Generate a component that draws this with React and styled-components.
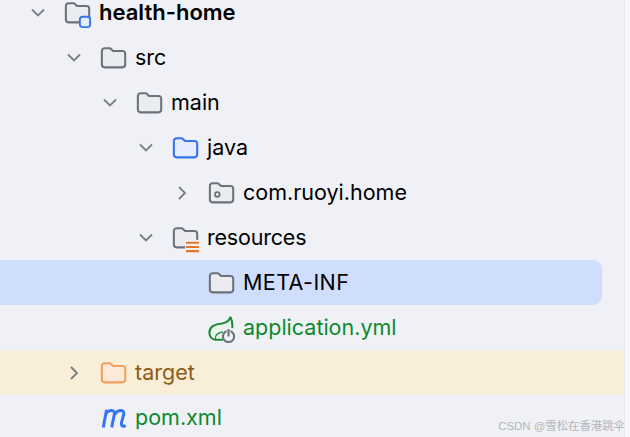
import React from "react";
import styled, { createGlobalStyle } from "styled-components";

const GlobalStyle = createGlobalStyle`
  html, body {
    margin: 0;
    padding: 0;
    height: 437px;
    overflow: hidden;
    background: #f8f9fb;
  }
`;

const Panel = styled.div`
  position: relative;
  box-sizing: border-box;
  width: 625px;
  height: 437px;
  overflow: hidden;
  background: #f0f1f6;
  border-right: 1px solid #e6e7eb;
  font-family: Inter, "Liberation Sans", sans-serif;
`;

const List = styled.ul`
  list-style: none;
  margin: -10px 0 0;
  padding: 0;
`;

const rowBackgrounds = {
  selected: "#cfdefc",
  excluded: "#f9eed8",
};

const Row = styled.li`
  display: flex;
  align-items: center;
  height: 45px;
  padding-left: ${(props) => 26 + props.$level * 36}px;
  width: ${(props) => (props.$state === "selected" ? "602px" : "auto")};
  box-sizing: border-box;
  background: ${(props) => rowBackgrounds[props.$state] || "transparent"};
  border-radius: ${(props) => (props.$state === "selected" ? "0 9px 9px 0" : "0")};
`;

const Arrow = styled.span`
  display: flex;
  justify-content: center;
  width: 24px;
  margin-right: 14px;
`;

const IconBox = styled.span`
  display: flex;
  width: 28px;
  height: 28px;
  margin-right: 7px;
`;

const Name = styled.span`
  padding-bottom: 2px;
  font-size: ${(props) => (props.$bold ? "22px" : "21.5px")};
  line-height: 28px;
  letter-spacing: ${(props) => props.$tracking || 0}px;
  white-space: nowrap;
  color: ${(props) => props.$color || "#000"};
  font-weight: ${(props) => (props.$bold ? 600 : 400)};
`;

const Watermark = styled.span`
  position: absolute;
  right: -1px;
  bottom: 4px;
  font-family: "Liberation Sans", "Noto Sans CJK SC", sans-serif;
  font-size: 11.4px;
  line-height: 14px;
  color: #b4b5b9;
  white-space: nowrap;
`;

const folderPath =
  "M3 8.5 A3 3 0 0 1 6 5.5 H11 A2.5 2.5 0 0 1 12.8 6.3 L15 8.5 H25 A3 3 0 0 1 28 11 V23 A3 3 0 0 1 25 26 H6 A3 3 0 0 1 3 23 Z";

const ChevronDown = () => (
  <svg width="18" height="18" viewBox="0 0 18 18" fill="none">
    <path d="M3 5.5 L9 11.5 L15 5.5" stroke="#7b7e85" strokeWidth="1.8" />
  </svg>
);

const ChevronRight = () => (
  <svg width="18" height="18" viewBox="0 0 18 18" fill="none">
    <path d="M6 3 L12 9 L6 15" stroke="#7b7e85" strokeWidth="1.8" />
  </svg>
);

const Folder = ({ stroke = "#6e7179", fill = "#ebecf0", children }) => (
  <svg width="30" height="30" viewBox="1 2 30 30" fill="none">
    <path d={folderPath} fill={fill} stroke={stroke} strokeWidth="2.2" />
    {children}
  </svg>
);

const ModuleFolder = () => (
  <Folder>
    <rect x="18" y="20" width="11" height="11" rx="3" fill="#e4ecfd" stroke="#3574f0" strokeWidth="2" />
  </Folder>
);

const PackageFolder = () => (
  <Folder>
    <circle cx="11" cy="17.5" r="2.5" stroke="#6e7179" strokeWidth="1.8" />
  </Folder>
);

const ResourceFolder = () => (
  <Folder>
    <rect x="15" y="18" width="17" height="14" fill="#f0f1f6" />
    <path d="M16 21 H30 M16 25.5 H30 M16 30 H30" stroke="#e8742a" strokeWidth="2.2" />
  </Folder>
);

const SpringFile = () => (
  <svg width="30" height="30" viewBox="0 0 30 30" fill="none">
    <path
      d="M24 2 C23 6 20 8.5 15 9 C7 9.5 1 13 1.5 19.5 C1.8 23 4 26.5 8 26.5 H16 L26 14 C26.5 9 25.5 5 24 2 Z"
      fill="#e9f5ec"
    />
    <path
      d="M24 2 C23 6 20 8.5 15 9 C7 9.5 1 13 1.5 19.5 C1.8 23 4 26.5 8 26.5 H16 M24 2 C25.5 5 26.5 9 26 14"
      stroke="#1f8a3b"
      strokeWidth="2.2"
    />
    <path d="M8 26 C7 22 10 19 16 18" stroke="#1f8a3b" strokeWidth="1.4" />
    <circle cx="22" cy="23" r="6" fill="#f0f1f6" stroke="#6e7179" strokeWidth="2.2" />
    <path d="M22 14.5 V23" stroke="#f0f1f6" strokeWidth="4" />
    <path d="M22 15 V23" stroke="#6e7179" strokeWidth="2.2" />
  </svg>
);

const MavenFile = () => (
  <svg width="30" height="30" viewBox="0 0 30 30" fill="none">
    <path
      d="M3.5 24 L7 5 M6 10 C8 5 16 4 15.5 9.5 L12.5 24 M16 10 C18 5 26 4 25.5 9.5 L23 19 C22.5 22.5 25 23.5 27.5 22"
      stroke="#3574f0"
      strokeWidth="3.2"
    />
  </svg>
);

const rows = [
  { name: "health-home", level: 0, open: true, icon: <ModuleFolder />, bold: true },
  { name: "src", level: 1, open: true, icon: <Folder /> },
  { name: "main", level: 2, open: true, icon: <Folder /> },
  { name: "java", level: 3, open: true, icon: <Folder stroke="#3574f0" fill="#e4ecfd" /> },
  { name: "com.ruoyi.home", level: 4, open: false, icon: <PackageFolder /> },
  { name: "resources", level: 3, open: true, icon: <ResourceFolder />, tracking: -0.2 },
  { name: "META-INF", level: 4, icon: <Folder />, state: "selected", tracking: 0.4 },
  { name: "application.yml", level: 4, icon: <SpringFile />, color: "#0b8a2c" },
  { name: "target", level: 1, open: false, icon: <Folder stroke="#f2a05c" fill="#fdeadb" />, state: "excluded", color: "#8f5a14" },
  { name: "pom.xml", level: 1, icon: <MavenFile />, color: "#0b8a2c" },
];

const TreeRow = ({ row }) => (
  <Row $level={row.level} $state={row.state}>
    <Arrow>
      {row.open === true && <ChevronDown />}
      {row.open === false && <ChevronRight />}
    </Arrow>
    <IconBox>{row.icon}</IconBox>
    <Name $color={row.color} $bold={row.bold} $tracking={row.tracking}>
      {row.name}
    </Name>
  </Row>
);

const App = () => (
  <Panel>
    <GlobalStyle />
    <List>
      {rows.map((row) => (
        <TreeRow key={row.name} row={row} />
      ))}
    </List>
    <Watermark>CSDN @雪松在香港跳伞</Watermark>
  </Panel>
);

export default App;
